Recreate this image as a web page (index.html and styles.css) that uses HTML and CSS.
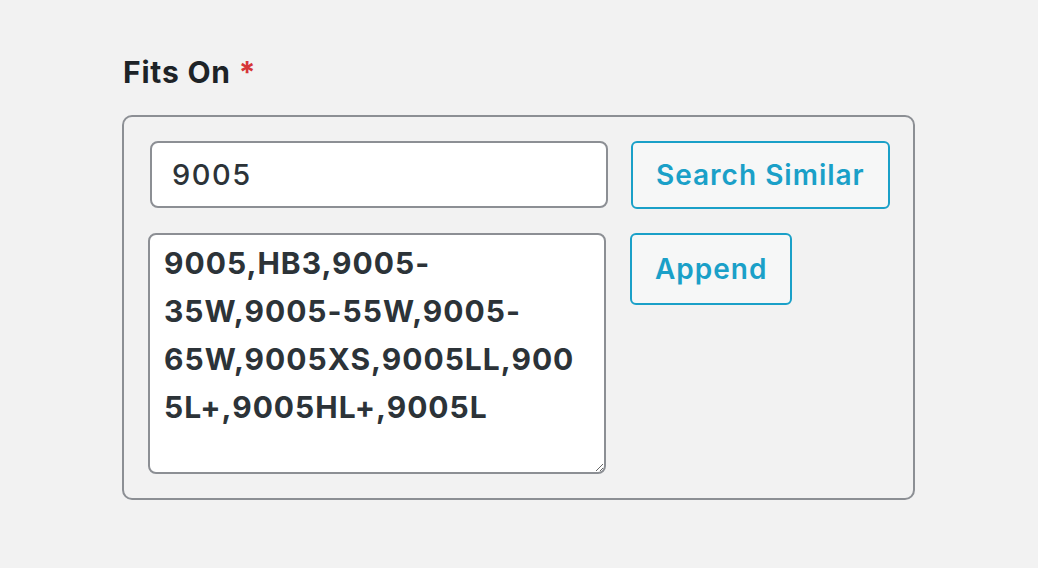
FILE: index.html
```html
<!DOCTYPE html>
<html lang="en">
<head>
  <meta charset="UTF-8" />
  <meta name="viewport" content="width=device-width, initial-scale=1.0" />
  <title>Fits On</title>
  <link rel="stylesheet" href="styles.css">
</head>
<body>
  <div class="field">
    <label class="field-label" for="fits-search">Fits On <span class="required">*</span></label>

    <div class="fits-box">
      <input type="text" id="fits-search" class="fits-input" value="9005" />
      <button type="button" class="btn-outline">Search Similar</button>
      <textarea id="fits-list" class="fits-list">9005,HB3,9005-35W,9005-55W,9005-65W,9005XS,9005LL,9005L+,9005HL+,9005L</textarea>
      <button type="button" class="btn-outline btn-append">Append</button>
    </div>
  </div>
</body>
</html>
```

FILE: styles.css
```css
* {
  box-sizing: border-box;
  margin: 0;
  padding: 0;
  font-family: 'Inter', sans-serif;
}

body {
  background: #f2f2f2;
  color: #1d2327;
  min-height: 100vh;
}

.field {
  padding: 54px 0 0 122px;
}

.field-label {
  display: block;
  font-size: 30px;
  font-weight: 700;
  line-height: 36px;
  letter-spacing: 0.8px;
  margin-left: 1px;
  margin-bottom: 25px;
}

.required {
  color: #d63638;
}

.fits-box {
  display: grid;
  grid-template-columns: 458px auto;
  justify-content: start;
  column-gap: 23px;
  row-gap: 24px;
  align-items: start;
  width: 793px;
  padding: 24px 24px 24px 26px;
  border: 2px solid #8c8f94;
  border-radius: 10px;
}

.fits-input,
.fits-list {
  width: 100%;
  background: #fff;
  border: 2px solid #8c8f94;
  border-radius: 8px;
  color: #2c3338;
  outline: none;
}

.fits-input {
  height: 67px;
  padding: 0 20px;
  font-size: 29px;
  font-weight: 500;
  letter-spacing: 1.5px;
}

.fits-list {
  height: 241px;
  margin-left: -2px;
  padding: 4px 14px;
  font-size: 30px;
  font-weight: 700;
  line-height: 48px;
  letter-spacing: 1px;
}

.btn-outline {
  justify-self: start;
  height: 68px;
  padding: 0 23px;
  background: #f6f7f7;
  border: 2px solid #1aa0c8;
  border-radius: 6px;
  color: #1aa0c8;
  font-size: 28px;
  font-weight: 600;
  letter-spacing: 1px;
  white-space: nowrap;
  cursor: pointer;
}

.btn-append {
  height: 72px;
  margin-left: -1px;
}
```
